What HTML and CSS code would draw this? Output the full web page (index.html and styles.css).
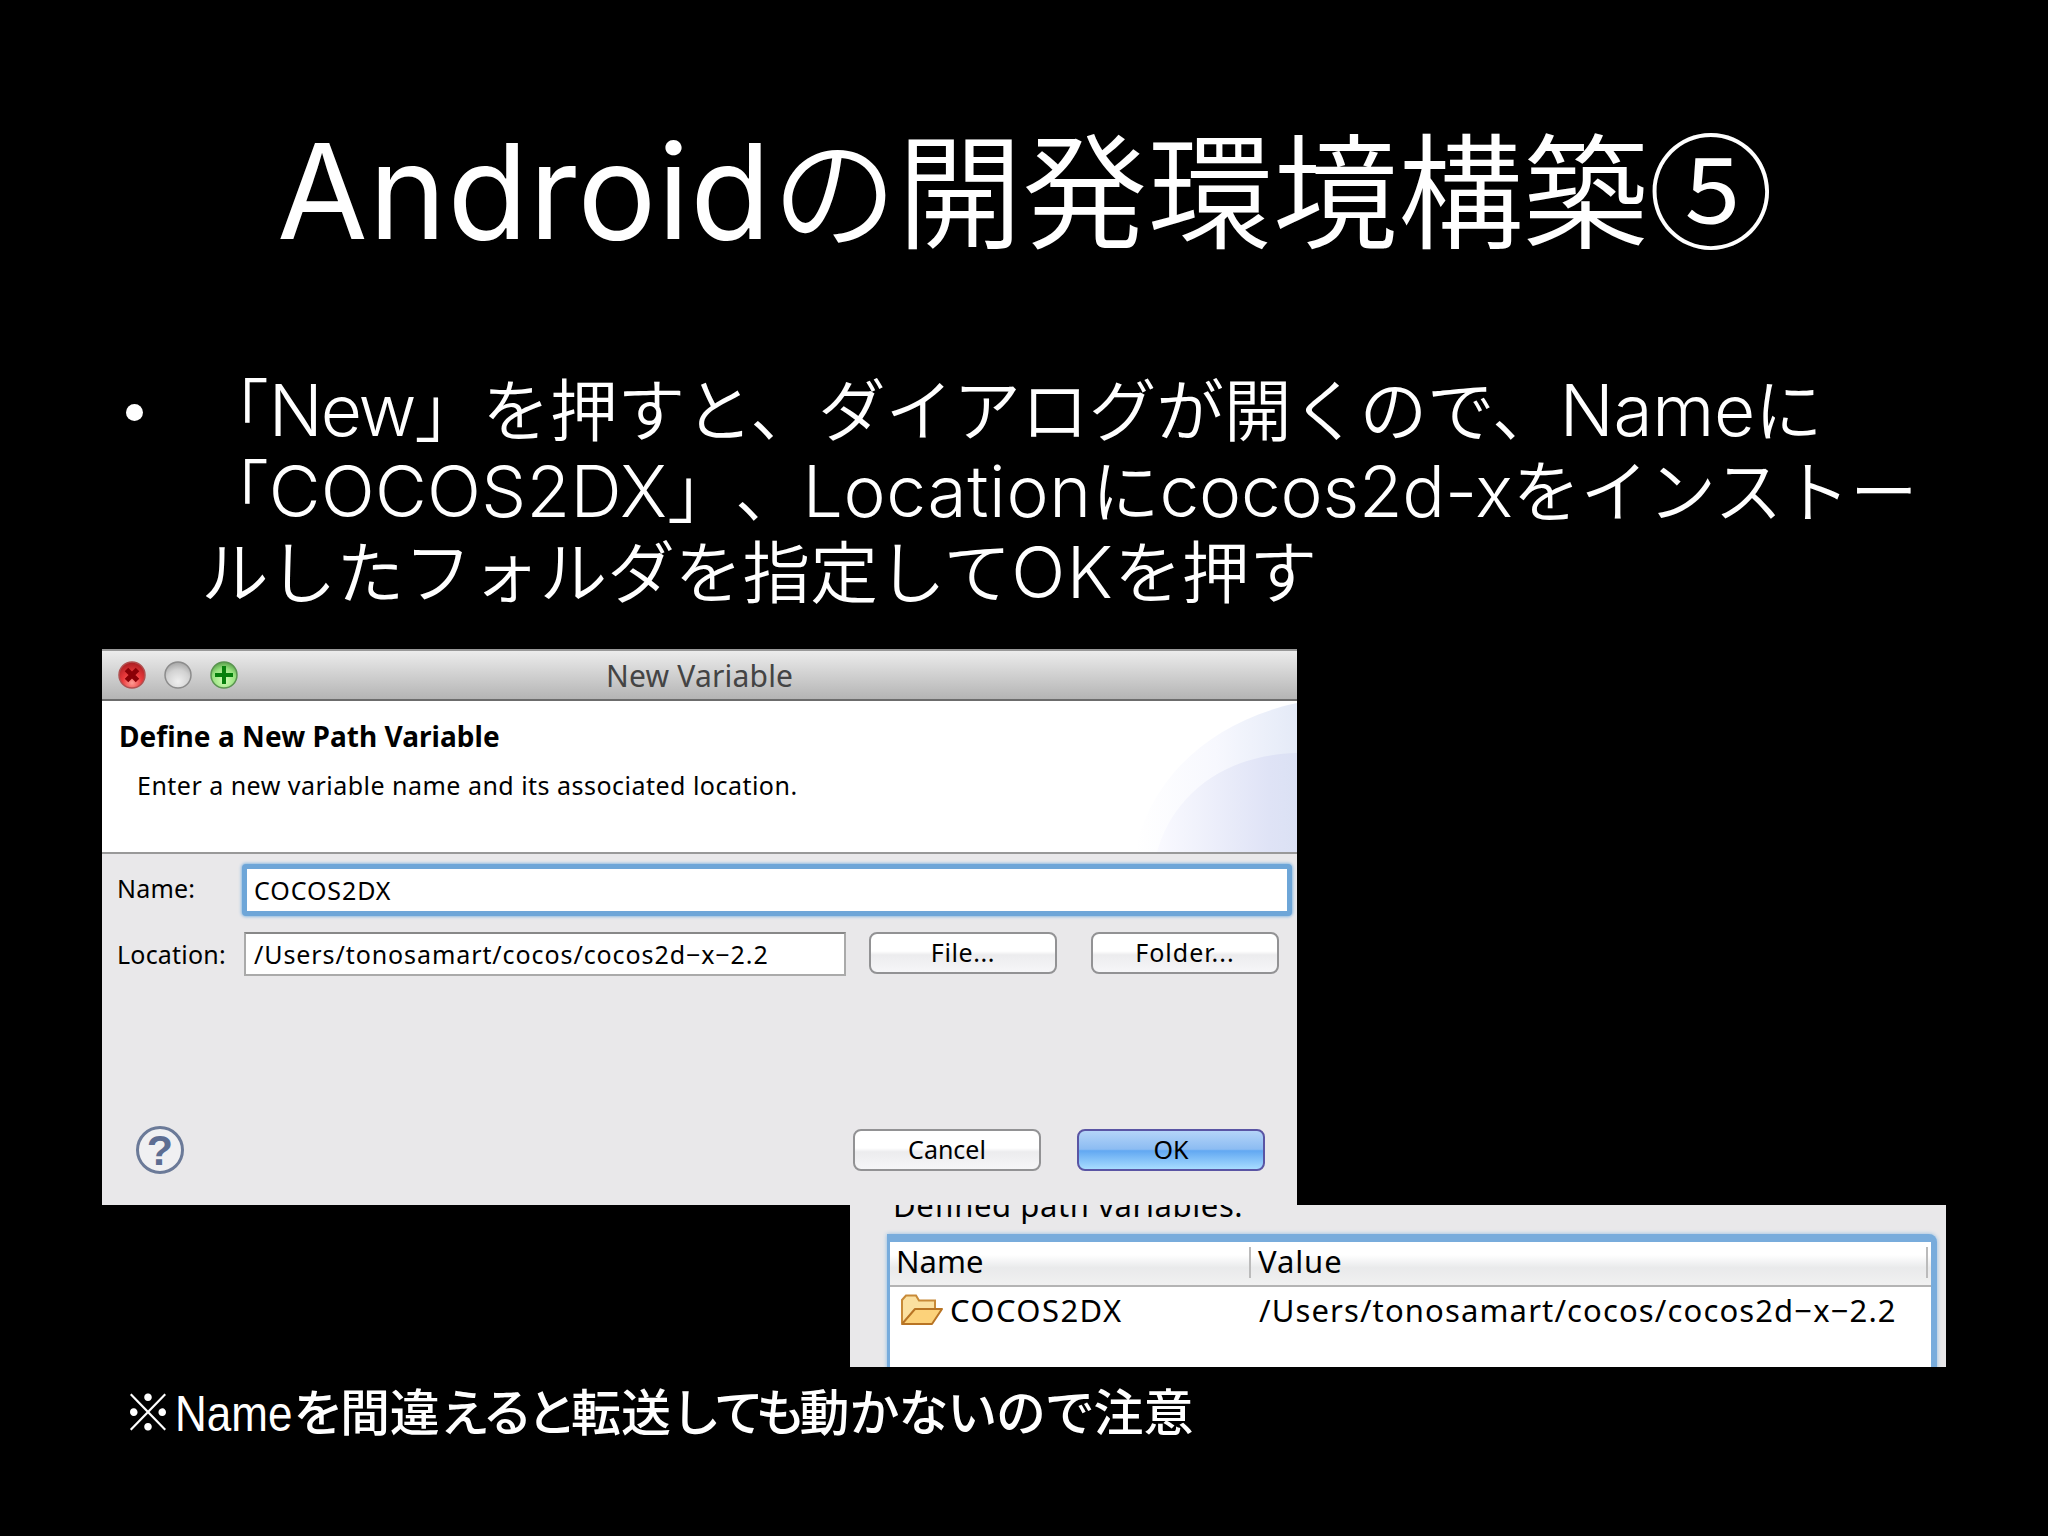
FILE: index.html
```
<!DOCTYPE html>
<html lang="ja">
<head>
  <meta charset="UTF-8" />
  <title>Androidの開発環境構築⑤</title>
  <link rel="stylesheet" href="styles.css">
</head>
<body>
  <main class="slide">
    <h1><span class="latin">Android</span>の開発環境構築⑤</h1>

    <ul class="points">
      <li>
        <div class="line">「<span class="latin t-new">New</span>」を押すと、ダイアログが開くので、<span class="latin t-name">Name</span>に</div>
        <div class="line">「<span class="latin t-var">COCOS2DX</span>」、<span class="latin t-loc">Location</span>に<span class="latin t-cocos">cocos2d-x</span>をインストー</div>
        <div class="line">ルしたフォルダを指定して<span class="latin t-ok">OK</span>を押す</div>
      </li>
    </ul>

    <section class="dialog">
      <div class="titlebar">
        <svg class="lights" viewBox="0 0 130 32">
          <defs>
            <radialGradient id="red" cx="50%" cy="80%" r="75%">
              <stop offset="0" stop-color="#ff9c94" /><stop offset="0.5" stop-color="#ea3a3c" /><stop offset="1" stop-color="#b02024" />
            </radialGradient>
            <radialGradient id="grey" cx="50%" cy="75%" r="75%">
              <stop offset="0" stop-color="#efefef" /><stop offset="0.6" stop-color="#d2d2d2" /><stop offset="1" stop-color="#a4a4a4" />
            </radialGradient>
            <radialGradient id="green" cx="50%" cy="70%" r="75%">
              <stop offset="0" stop-color="#d4ffb8" /><stop offset="0.6" stop-color="#96e07e" /><stop offset="1" stop-color="#4c9440" />
            </radialGradient>
          </defs>
          <circle cx="18" cy="16" r="13" fill="url(#red)" stroke="#b05050" stroke-width="1.5" />
          <path d="M12.500 10.500l11 11M23.500 10.500l-11 11" stroke="#8a0006" stroke-width="5" />
          <circle cx="64" cy="16" r="13" fill="url(#grey)" stroke="#8c8c8c" stroke-width="1.5" />
          <circle cx="110" cy="16" r="13" fill="url(#green)" stroke="#5a9450" stroke-width="1.5" />
          <path d="M110 7v18M101 16h18" stroke="#06800c" stroke-width="4" />
        </svg>
        <span class="caption">New Variable</span>
      </div>

      <div class="banner">
        <div>
          <h2>Define a New Path Variable</h2>
          <p>Enter a new variable name and its associated location.</p>
        </div>
        <svg class="swoosh" viewBox="0 0 170 151">
          <defs>
            <linearGradient id="outer"><stop offset="0" stop-color="#fff" /><stop offset="0.5" stop-color="#f7f8fe" /><stop offset="1" stop-color="#e4eaf7" /></linearGradient>
            <linearGradient id="inner"><stop offset="0" stop-color="#fafaff" /><stop offset="0.8" stop-color="#dfe3f6" /><stop offset="1" stop-color="#dbe1f4" /></linearGradient>
          </defs>
          <path d="M8 151C22 82 78 22 170 2V151Z" fill="url(#outer)" />
          <path d="M30 151C44 100 90 54 170 52V151Z" fill="url(#inner)" />
        </svg>
      </div>

      <form class="fields">
        <label>Name:</label>
        <div class="input focused">COCOS2DX</div>
        <label>Location:</label>
        <div class="location-row">
          <div class="input">/Users/tonosamart/cocos/cocos2d−x−2.2</div>
          <div class="button file">File...</div>
          <div class="button folder-btn">Folder...</div>
        </div>
      </form>

      <div class="actions">
        <div class="help">?</div>
        <div class="button">Cancel</div>
        <div class="button primary">OK</div>
      </div>
    </section>

    <section class="variables">
      <div class="heading">Defined path variables:</div>
      <div class="table">
        <div class="row head">
          <div class="cell">Name</div>
          <div class="cell value">Value</div>
        </div>
        <div class="row">
          <div class="cell">
            <svg class="folder" viewBox="0 0 44 32">
              <path d="M2 29V6L6 1.500H16L19 6.500H35V15" fill="#fbe0a0" stroke="#c88a38" stroke-width="2" />
              <path d="M2 30L15 15H42L32 30Z" fill="#fcd27a" stroke="#b87424" stroke-width="2" stroke-linejoin="round" />
            </svg>
            <span>COCOS2DX</span>
          </div>
          <div class="cell path">/Users/tonosamart/cocos/cocos2d−x−2.2</div>
        </div>
      </div>
    </section>

    <p class="note">※<span class="narrow">Name</span><span class="kana-wide">を</span>間違<span class="kana">えると</span>転送<span class="kana">しても</span>動<span class="kana-loose">かないので</span>注意</p>
  </main>
</body>
</html>
```
FILE: styles.css
```
* {
  box-sizing: border-box;
}

body {
  margin: 0;
  background: #000;
}

.slide {
  width: 2048px;
  height: 1536px;
  overflow: hidden;
  background: #000;
  color: #fff;
  font-family: "Noto Sans CJK JP", sans-serif;
  font-weight: 350;
  text-spacing-trim: space-all;
}

.slide svg {
  display: block;
  flex: none;
}

h1 {
  margin: 0;
  padding: 105px 0 0 277px;
  height: 360px;
  font-size: 125.2px;
  font-weight: 350;
  line-height: 160px;
  white-space: nowrap;
}

.latin {
  font-family: Inter, "Liberation Sans", sans-serif;
  font-size: 1.05em;
  font-weight: 360;
  line-height: 0;
}

h1 .latin {
  font-weight: 400;
  letter-spacing: 1.1px;
}

/* bullet list */
.points {
  list-style: none;
  margin: 0;
  padding: 6px 0 0 201px;
  height: 289px;
  font-size: 67.7px;
  line-height: 81.2px;
}

.points li {
  position: relative;
}

.points li::before {
  content: "";
  position: absolute;
  left: -75px;
  top: 38px;
  width: 17px;
  height: 17px;
  border-radius: 50%;
  background: #fff;
}

.line {
  white-space: nowrap;
}

.t-new {
  letter-spacing: -2px;
}

.t-name {
  letter-spacing: -0.3px;
}

.t-var {
  letter-spacing: 0.3px;
}

.t-loc {
  letter-spacing: 0.7px;
}

.t-cocos {
  letter-spacing: -0.2px;
}

.t-ok {
  letter-spacing: 1.5px;
}

/* New Variable dialog */
.dialog {
  display: flex;
  flex-direction: column;
  width: 1195px;
  height: 556px;
  margin-left: 102px;
  background: #e9e8ea;
  color: #000;
  font: 450 25px "Noto Sans", sans-serif;
}

.titlebar {
  display: flex;
  align-items: center;
  height: 52px;
  padding-left: 12px;
  border-top: 2px solid #999;
  border-bottom: 2px solid #6c6c6c;
  background: linear-gradient(#ececec, #b4b4b4);
}

.lights {
  width: 130px;
  height: 32px;
}

.caption {
  margin-left: 362px;
  color: #444;
  font-size: 30px;
  letter-spacing: 0.2px;
}

.banner {
  display: flex;
  justify-content: space-between;
  height: 153px;
  border-bottom: 2px solid #999;
  background: #fff;
}

.banner h2 {
  margin: 17px 0 0 17px;
  font-size: 28px;
  letter-spacing: 0.05px;
  line-height: 36px;
}

.banner p {
  margin: 14px 0 0 35px;
  letter-spacing: 0.48px;
  line-height: 34px;
}

.swoosh {
  width: 170px;
  height: 151px;
}

.fields {
  display: grid;
  grid-template-columns: 124px 1fr;
  row-gap: 16px;
  align-items: center;
  margin: 0;
  padding: 10px 5px 0 15px;
}

.fields label {
  letter-spacing: 0.2px;
}

.fields label:first-child {
  padding-bottom: 4px;
}

.input {
  width: 602px;
  height: 44px;
  margin-left: 3px;
  padding-left: 8px;
  border: 2px solid #aaa;
  border-top-color: #888;
  background: #fff;
  letter-spacing: 0.92px;
  line-height: 41px;
  white-space: nowrap;
}

.input.focused {
  width: 1050px;
  height: 52px;
  margin-left: 1px;
  padding-left: 7px;
  border: 5px solid #6ea6d8;
  border-radius: 4px;
  box-shadow: 0 0 3px 1px #8dbbe2;
  line-height: 43px;
}

.location-row {
  display: flex;
}

.button {
  width: 188px;
  height: 42px;
  border: 2px solid #929294;
  border-radius: 8px;
  background: linear-gradient(#fff 45%, #ececee 55%, #f6f6f8);
  line-height: 36px;
  text-align: center;
}

.file {
  margin-left: 23px;
  letter-spacing: 0.6px;
}

.folder-btn {
  margin-left: 34px;
  letter-spacing: 1px;
}

.actions {
  display: flex;
  margin-top: auto;
  padding: 0 32px 31px 34px;
}

.help {
  width: 48px;
  height: 48px;
  margin-right: auto;
  border: 3px solid #6b7a98;
  border-radius: 50%;
  background: #f0f0f2;
  color: #5d6d92;
  font: 700 43px/43px "Liberation Sans", sans-serif;
  text-align: center;
}

.actions .button {
  margin: 3px 0 0 36px;
}

.button.primary {
  border-color: #5a55a4;
  background: linear-gradient(#b4d4f8, #8cbcf2 48%, #62a8f2 52%, #a8dcff);
}

/* defined variables list */
.variables {
  width: 1096px;
  height: 162px;
  margin-left: 850px;
  padding-left: 37px;
  overflow: hidden;
  background: #e9e8ea;
  color: #000;
  font: 450 31px "Noto Sans", sans-serif;
}

.heading {
  height: 29px;
  padding-left: 6px;
  letter-spacing: 0.6px;
  line-height: 0;
}

.table {
  width: 1050px;
  height: 140px;
  border: solid #78acdc;
  border-width: 8px 6px 0 3px;
  border-radius: 0 8px 0 0;
  background: #fff;
  box-shadow: 0 0 4px #8dbbe2;
}

.row {
  display: grid;
  grid-template-columns: 362px 1fr;
  line-height: 46px;
}

.row.head {
  height: 45px;
  border-bottom: 2px solid #b4b4b4;
  background: linear-gradient(#fff 30%, #e9eaeb 60%, #f1f1f1);
  line-height: 38px;
}

.cell {
  display: flex;
  align-items: center;
  padding-left: 10px;
  letter-spacing: 1.4px;
}

.head .cell {
  height: 31px;
  margin: 5px 1px 0 0;
  padding: 0 0 4px 6px;
  border-right: 2px solid #bbb;
  letter-spacing: 0;
}

.head .cell.value {
  margin-right: 3px;
  letter-spacing: 0.9px;
}

.cell.path {
  padding-left: 7px;
  letter-spacing: 1.13px;
}

.folder {
  width: 44px;
  height: 32px;
  margin-right: 6px;
}

/* footnote */
.note {
  margin: 0;
  padding: 5px 0 0 123px;
  font-size: 50px;
  font-weight: 450;
  line-height: 74px;
  white-space: nowrap;
}

.narrow {
  display: inline-block;
  margin: 0 -15px 0 2px;
  font-family: "Liberation Sans", sans-serif;
  line-height: 1;
  transform: scaleX(0.88);
  transform-origin: left;
}

.kana {
  letter-spacing: -5.8px;
}

.kana-wide {
  letter-spacing: -3.5px;
}

.kana-loose {
  letter-spacing: -1.2px;
}
```
